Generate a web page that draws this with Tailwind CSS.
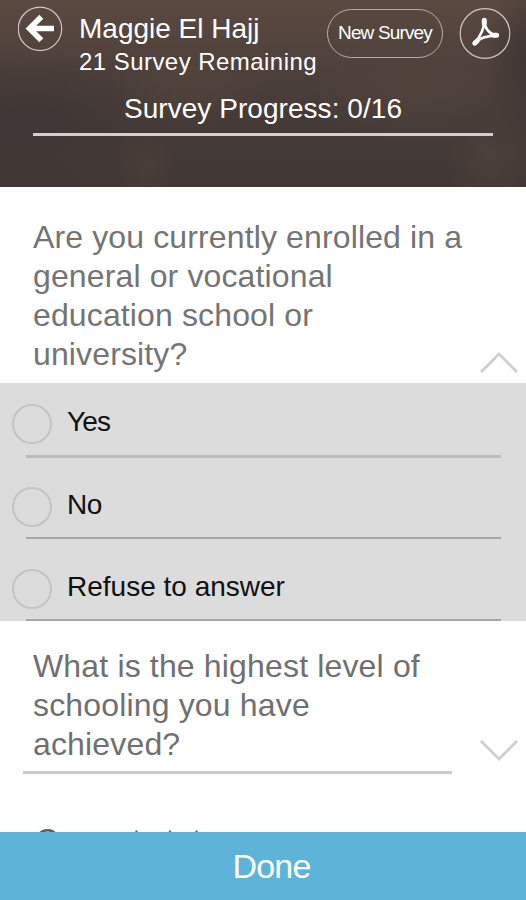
<!DOCTYPE html>
<html lang="en">
<head>
    <meta charset="UTF-8">
    <meta name="viewport" content="width=device-width, initial-scale=1.0">
    <title>Survey</title>
    <script src="https://cdn.jsdelivr.net/npm/@tailwindcss/browser@4"></script>
    <style>
        body {
            font-family: 'Liberation Sans', Arial, sans-serif;
        }
        .photo-header {
            background:
                radial-gradient(ellipse 30px 35px at 145px 165px, #4b3e39 0%, transparent 100%),
                radial-gradient(ellipse 75px 45px at 190px 80px, #51433c 0%, transparent 100%),
                radial-gradient(ellipse 45px 50px at 490px 155px, #4c403a 0%, transparent 100%),
                radial-gradient(ellipse 40px 80px at 526px 60px, #3f3534 0%, transparent 100%),
                radial-gradient(ellipse 110px 60px at 420px 85px, #50433c 0%, transparent 100%),
                radial-gradient(ellipse 130px 70px at 30px 120px, #3f3635 0%, transparent 100%),
                linear-gradient(#5a4941 0%, #50423c 30%, #463b38 60%, #413735 100%);
        }
    </style>
</head>
<body class="bg-white">
    <div class="flex h-[900px] w-[526px] flex-col overflow-hidden">
        <!-- Header -->
        <header class="photo-header h-[187px] shrink-0 text-white">
            <div class="flex items-start pt-[6px] pl-[18px]">
                <button class="h-[45px] w-[45px] shrink-0">
                    <svg class="h-[45px] w-[45px]" viewBox="0 0 45 45" fill="none" stroke="#fff">
                        <circle cx="22" cy="22.8" r="21.7" stroke="#cfc8c4" stroke-width="1.2"/>
                        <path d="M36 22.5H12M23.3 10.7L11.5 22.5L23.3 34.3" stroke-width="5.6"/>
                    </svg>
                </button>
                <div class="ml-[16px] w-[248px] shrink-0 whitespace-nowrap">
                    <h1 class="mt-[6px] text-[28px] leading-[34px]">Maggie El Hajj</h1>
                    <p class="text-[24px] leading-[32px] tracking-[0.45px]">21 Survey Remaining</p>
                </div>
                <button class="mt-[3px] h-[49px] w-[116px] shrink-0 rounded-full border border-[#b9b0ab] text-[19px] tracking-[-0.85px] whitespace-nowrap">New Survey</button>
                <button class="mt-[2px] ml-[16px] h-[51px] w-[52px] shrink-0">
                    <svg class="h-[51px] w-[52px]" viewBox="0 0 52 51" fill="none" stroke="#fff" stroke-linecap="round" stroke-linejoin="round">
                        <circle cx="26" cy="25.5" r="24.8" stroke="#cfc8c4" stroke-width="1.2"/>
                        <path d="M25.3 12.5C25.2 20 22.5 27 16 34.5M25.3 12.5C25.2 19 29.5 26 37.5 27.4M15.8 35C20.5 30.2 28 27.8 37.5 27.4" stroke-width="2.6"/>
                        <path d="M25.3 12.2V15.5M15.8 35.2L18.2 33M34.8 27.3H37.6" stroke-width="5"/>
                    </svg>
                </button>
            </div>
            <div class="mx-[33px] mt-[14px] border-b-[3px] border-[#d3cfcc] pt-px pb-[8px] text-center text-[28px] leading-[32px] tracking-[0.05px] whitespace-nowrap">Survey Progress: 0/16</div>
        </header>

        <!-- Survey questions -->
        <main class="h-[645px] shrink-0 overflow-hidden bg-white">
            <section class="flex items-end justify-between pt-[31px] pr-[8px] pb-[9px] pl-[33px] text-[#747474]">
                <h2 class="w-[432px] text-[32px] leading-[39px] tracking-[0.13px]">Are you currently enrolled in a general or vocational education school or university?</h2>
                <svg class="h-[22px] w-[38px] shrink-0" viewBox="0 0 38 22" fill="none" stroke="#cfcfcf" stroke-width="2.8">
                    <path d="M1 20L19 2L37 20"/>
                </svg>
            </section>

            <ul class="h-[238px] bg-[#dcdcdc] text-[28px] leading-[32px] text-[#101010]">
                <li class="flex h-[75px] flex-col justify-end">
                    <div class="flex items-center gap-[15px] pb-[11px] pl-[12px]">
                        <span class="h-[40px] w-[40px] rounded-full border-2 border-[#c4c4c4]"></span>
                        <span class="pb-[4px] tracking-[-0.8px]">Yes</span>
                    </div>
                    <div class="mr-[25px] ml-[26px] h-[3px] bg-[#bdbdbd]"></div>
                </li>
                <li class="flex h-[81px] flex-col justify-end">
                    <div class="flex items-center gap-[15px] pb-[10px] pl-[12px]">
                        <span class="h-[40px] w-[40px] rounded-full border-2 border-[#c4c4c4]"></span>
                        <span class="pb-[5px] tracking-[-0.4px]">No</span>
                    </div>
                    <div class="mr-[25px] ml-[26px] h-[2px] bg-[#a6a6a6]"></div>
                </li>
                <li class="flex h-[82px] flex-col justify-end">
                    <div class="flex items-center gap-[15px] pb-[10px] pl-[12px]">
                        <span class="h-[40px] w-[40px] rounded-full border-2 border-[#c4c4c4]"></span>
                        <span class="pb-[5px]">Refuse to answer</span>
                    </div>
                    <div class="mr-[25px] ml-[26px] h-[2px] bg-[#a6a6a6]"></div>
                </li>
            </ul>

            <section class="flex items-end justify-between pt-[26px] pr-[8px] pl-[23px] text-[#707070]">
                <h2 class="w-[429px] border-b-[3px] border-[#cacaca] pb-[7px] pl-[10px] text-[32px] leading-[39px] tracking-[0.16px]">What is the highest level of schooling you have achieved?</h2>
                <svg class="mb-[13px] h-[22px] w-[38px] shrink-0" viewBox="0 0 38 22" fill="none" stroke="#cfcfcf" stroke-width="2.8">
                    <path d="M1 2L19 20L37 2"/>
                </svg>
            </section>

            <section class="pt-[47px] pl-[35px] text-[#606060]">
                <h2 class="text-[32px] leading-[39px] tracking-[-0.1px]">Current status</h2>
            </section>
        </main>

        <!-- Done bar -->
        <button class="h-[68px] w-full shrink-0 bg-[#5eb3d9] pl-[17px] text-[34px] leading-[68px] tracking-[-0.8px] text-white">Done</button>
    </div>
</body>
</html>
